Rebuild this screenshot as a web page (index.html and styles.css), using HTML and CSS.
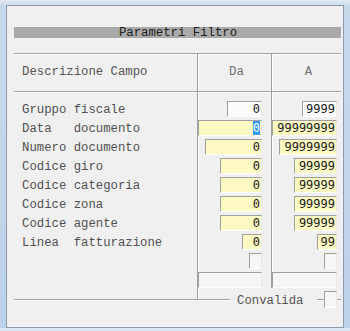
FILE: index.html
```html
<!DOCTYPE html>
<html lang="it">
<head>
  <meta charset="UTF-8">
  <meta name="viewport" content="width=device-width, initial-scale=1.0">
  <title>Parametri Filtro</title>
  <link rel="stylesheet" href="styles.css">
</head>
<body>

<div class="window">
  <div class="panel">
    <div class="title">Parametri Filtro</div>

    <div class="head">
      <div class="c-label">Descrizione Campo</div>
      <div class="c-da">Da</div>
      <div class="c-a">A</div>
    </div>

    <div class="body">
      <div class="labels">
        <div class="lbl">Gruppo fiscale</div>
        <div class="lbl">Data   documento</div>
        <div class="lbl">Numero documento</div>
        <div class="lbl">Codice giro</div>
        <div class="lbl">Codice categoria</div>
        <div class="lbl">Codice zona</div>
        <div class="lbl">Codice agente</div>
        <div class="lbl">Linea  fatturazione</div>
      </div>

      <div class="col col-da">
        <div class="fld white w35">0</div>
        <div class="fld w64"><span class="sel">0</span></div>
        <div class="fld w57">0</div>
        <div class="fld w42">0</div>
        <div class="fld w42">0</div>
        <div class="fld w42">0</div>
        <div class="fld w42">0</div>
        <div class="fld w20">0</div>
        <div class="fld empty w13"></div>
        <div class="fld empty w64"></div>
      </div>

      <div class="col col-a">
        <div class="fld white w35">9999</div>
        <div class="fld w65">99999999</div>
        <div class="fld w58">9999999</div>
        <div class="fld w43">99999</div>
        <div class="fld w43">99999</div>
        <div class="fld w43">99999</div>
        <div class="fld w43">99999</div>
        <div class="fld w20">99</div>
        <div class="fld empty w13"></div>
        <div class="fld empty w65"></div>
      </div>
    </div>

    <div class="foot">
      <span class="line l1"></span>
      <span class="foot-text">Convalida</span>
      <span class="spacer"></span>
      <span class="line l2"></span>
      <span class="fld empty w13"></span>
      <span class="line l3"></span>
    </div>
  </div>
</div>

</body>
</html>
```

FILE: styles.css
```css
body {
  margin: 0;
  padding: 0;
  background: linear-gradient(to bottom, #e2eaf3 0, #c8d9ec 6px, #bcd2ea 100%);
  font-family: "Liberation Mono", "Courier New", monospace;
  font-size: 12.3px;
}
.window {
  margin: 5px 0 0 6px;
  width: 336px;
  height: 321px;
  border: 1px solid #8d9aa8;
  background-color: #f0f0f0;
}
.panel {
  padding: 21px 2px 0 7px;
}
.title {
  width: 327px;
  height: 11px;
  line-height: 12px;
  background-color: #a9a9a9;
  color: #1e1e1e;
  text-align: center;
  padding-left: 1px;
  box-sizing: border-box;
}
.head {
  display: flex;
  width: 327px;
  height: 39px;
  margin-top: 15px;
  border-top: 1px solid #a0a0a0;
  border-bottom: 1px solid #a0a0a0;
  box-sizing: border-box;
  box-shadow: inset 0 1px 0 #fff, 0 1px 0 #fff;
  color: #555;
  line-height: 36px;
}
.c-label {
  width: 183px;
  padding-left: 8px;
  box-sizing: border-box;
}
.c-da, .c-a {
  border-left: 1px solid #a0a0a0;
  box-shadow: inset 1px 0 0 #fff;
  text-align: center;
  padding-left: 4px;
  box-sizing: border-box;
  color: #707070;
}
.c-da {
  width: 74px;
}
.c-a {
  width: 70px;
}
.body {
  display: flex;
  width: 327px;
  height: 208px;
}
.labels {
  width: 183px;
  padding: 9px 0 0 8px;
  box-sizing: border-box;
  color: #505050;
}
.lbl {
  height: 16px;
  line-height: 19px;
  margin-bottom: 3px;
  white-space: pre;
}
.col {
  display: flex;
  flex-direction: column;
  align-items: flex-end;
  gap: 3px;
  padding-top: 9px;
  border-left: 1px solid #a0a0a0;
  box-shadow: inset 1px 0 0 #fff;
  box-sizing: border-box;
}
.col-da {
  width: 74px;
  padding-right: 9px;
}
.col-a {
  width: 70px;
  padding-right: 4px;
  align-self: flex-start;
}
.fld {
  display: block;
  height: 16px;
  box-sizing: border-box;
  border: 1px solid;
  border-color: #a0a0a0 #e8e8e8 #fff #a0a0a0;
  background-color: #fcf9c3;
  font-family: "DejaVu Sans Mono", monospace;
  font-size: 12px;
  line-height: 14px;
  color: #1a1a1a;
  text-align: right;
  padding-right: 1px;
  overflow: hidden;
  white-space: nowrap;
}
.fld.white {
  background-color: #fcfcfc;
}
.fld.empty {
  background-color: #f6f6f6;
}
.sel {
  background-color: #3399ff;
  color: #fff;
}
.w13 { width: 13px; }
.w20 { width: 20px; }
.w35 { width: 35px; }
.w42 { width: 42px; }
.w43 { width: 43px; }
.w57 { width: 57px; }
.w58 { width: 58px; }
.w64 { width: 64px; }
.w65 { width: 65px; }
.foot {
  display: flex;
  align-items: center;
  width: 327px;
  height: 16px;
  margin-top: -9px;
}
.line {
  display: block;
  height: 1px;
  border-top: 1px solid #a0a0a0;
  background-color: #fff;
  margin-top: 1px;
}
.l1 { width: 216px; }
.l2 { width: 7px; }
.l3 { width: 4px; }
.foot-text {
  padding-left: 7px;
  color: #555;
  line-height: 14px;
  margin-top: 4px;
}
.spacer {
  flex: 1;
}
.foot .fld {
  height: 17px;
  margin-top: 1px;
}
```
